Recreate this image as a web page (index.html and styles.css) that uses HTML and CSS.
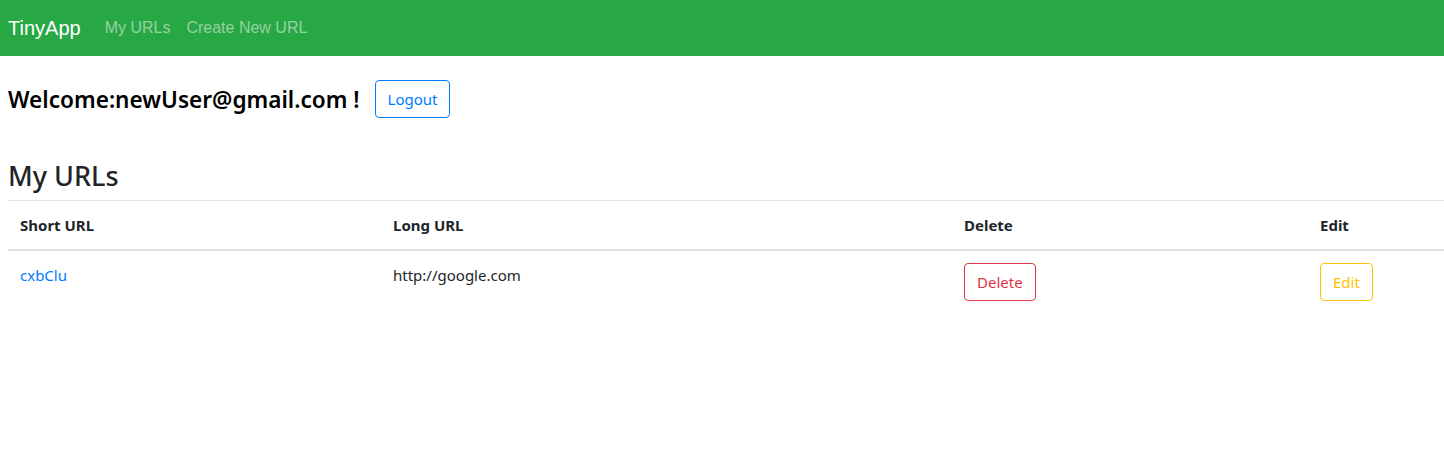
FILE: index.html
```html
<!DOCTYPE html>
<html>
<head>
<meta charset="utf-8">
<title>TinyApp</title>
<link rel="stylesheet" href="styles.css">
</head>
<body>
<nav class="navbar">
  <a class="brand" href="#">TinyApp</a>
  <a class="nav-link" href="#">My URLs</a>
  <a class="nav-link" href="#">Create New URL</a>
</nav>
<main class="content">
  <div class="welcome">
    <h4 class="welcome-text">Welcome:newUser@gmail.com !</h4>
    <button class="btn btn-primary">Logout</button>
  </div>
  <h2 class="title">My URLs</h2>
  <table class="table">
    <thead>
      <tr>
        <th class="c1">Short URL</th>
        <th class="c2">Long URL</th>
        <th class="c3">Delete</th>
        <th class="c4">Edit</th>
      </tr>
    </thead>
    <tbody>
      <tr>
        <td><a class="link" href="#">cxbClu</a></td>
        <td>http://google.com</td>
        <td><button class="btn btn-danger">Delete</button></td>
        <td><button class="btn btn-warning">Edit</button></td>
      </tr>
    </tbody>
  </table>
</main>
</body>
</html>
```
FILE: styles.css
```css
html, body {
  margin: 0;
  padding: 0;
  background: #fff;
}
body {
  font-family: "Noto Sans", "Open Sans", sans-serif;
  font-size: 15px;
  color: #212529;
}
.navbar {
  height: 56px;
  background: #28a745;
  display: flex;
  align-items: center;
  padding: 0 8px;
  font-family: "Liberation Sans", Arial, sans-serif;
}
.brand {
  color: #fff;
  font-size: 20px;
  text-decoration: none;
  margin-right: 24px;
}
.nav-link {
  color: rgba(255,255,255,.5);
  font-size: 16px;
  text-decoration: none;
  margin-right: 16px;
}
.content {
  padding-left: 8px;
}
.welcome {
  display: flex;
  align-items: center;
  padding-top: 24px;
  height: 38px;
}
.welcome-text {
  margin: 0 15px 0 0;
  font-size: 22.6px;
  font-weight: 600;
  color: #000;
}
.btn {
  font-family: inherit;
  font-size: 15px;
  background: transparent;
  border: 1px solid;
  border-radius: 4px;
  height: 38px;
  padding: 0 12px;
  cursor: pointer;
}
.btn-primary { color: #007bff; border-color: #007bff; }
.btn-danger { color: #dc3545; border-color: #dc3545; }
.btn-warning { color: #ffc107; border-color: #ffc107; }
.title {
  margin: 40px 0 0 0;
  font-size: 27px;
  font-weight: 500;
  line-height: 36px;
  height: 42px;
}
.table {
  width: 100%;
  border-collapse: collapse;
  margin-top: 0;
}
.table th, .table td {
  text-align: left;
  padding: 12px;
  vertical-align: top;
  line-height: 24px;
}
.table th {
  font-weight: 700;
  border-top: 1px solid #dee2e6;
  border-bottom: 2px solid #dee2e6;
}
.c1 { width: 349px; }
.c2 { width: 547px; }
.c3 { width: 332px; }
.link { color: #007bff; text-decoration: none; }
```
